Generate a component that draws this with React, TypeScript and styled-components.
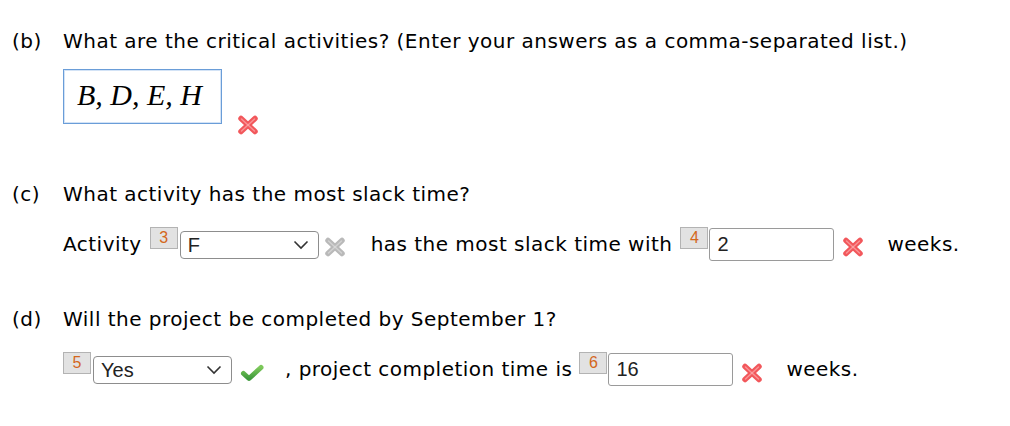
import React from 'react';
import styled, { createGlobalStyle } from 'styled-components';

const GlobalStyle = createGlobalStyle`
  html, body {
    margin: 0;
    padding: 0;
    background: #fff;
  }
  body {
    font-family: "DejaVu Sans", Verdana, sans-serif;
    color: #000;
  }
`;

const Page = styled.div`
  width: 1010px;
  height: 426px;
  padding: 28px 0 0 12px;
  box-sizing: border-box;
  overflow: hidden;
`;

const Part = styled.section<{ $gap: number }>`
  display: grid;
  grid-template-columns: 51px 1fr;
  margin-top: ${p => p.$gap}px;
`;

const Label = styled.div`
  font-size: 20px;
  line-height: 26px;
  letter-spacing: 0.5px;
`;

const Body = styled.div`
  display: flex;
  flex-direction: column;
`;

const Question = styled.div`
  font-size: 20px;
  line-height: 26px;
  letter-spacing: 0.48px;
  white-space: nowrap;
`;

const Row = styled.div<{ $top: number }>`
  display: flex;
  align-items: flex-start;
  margin-top: ${p => p.$top}px;
  white-space: nowrap;
`;

const Text = styled.span<{ $left?: number }>`
  font-size: 20px;
  line-height: 26px;
  letter-spacing: 0.48px;
  margin-top: 4px;
  margin-left: ${p => p.$left ?? 0}px;
`;

const AnswerBox = styled.div`
  width: 159px;
  height: 55px;
  box-sizing: border-box;
  border: 1px solid #6a9dd8;
  box-shadow: inset 0 0 0 1px #d3e3f6;
  padding: 6px 0 0 13px;
  font-family: "Liberation Serif", "Times New Roman", serif;
  font-style: italic;
  font-size: 30px;
  line-height: 38px;
`;

const Badge = styled.span<{ $left?: number }>`
  width: 28px;
  height: 22px;
  box-sizing: border-box;
  margin-left: ${p => p.$left ?? 0}px;
  background: #e2e2e2;
  border: 1px solid #b3b3b3;
  color: #d4671c;
  font-family: "Liberation Sans", Arial, sans-serif;
  font-size: 16px;
  line-height: 20px;
  text-align: center;
`;

const SelectBox = styled.div`
  display: flex;
  align-items: center;
  justify-content: space-between;
  width: 139px;
  height: 28px;
  box-sizing: border-box;
  margin: 4px 0 0 2px;
  padding: 0 9px 0 7px;
  border: 1px solid #8d8d8d;
  border-radius: 4px;
  background: #fff;
  font-family: "Liberation Sans", Arial, sans-serif;
  font-size: 20px;
  color: #222;
`;

const TextInput = styled.div`
  width: 125px;
  height: 33px;
  box-sizing: border-box;
  margin: 1px 0 0 1px;
  padding: 0 7px;
  border: 1px solid #9a9a9a;
  border-radius: 3px;
  background: #fff;
  font-family: "Liberation Sans", Arial, sans-serif;
  font-size: 20px;
  line-height: 31px;
  color: #222;
`;

const Mark = styled.span<{ $top: number; $left: number }>`
  display: inline-flex;
  margin-top: ${p => p.$top}px;
  margin-left: ${p => p.$left}px;
`;

const Chevron = () => (
  <svg width="16" height="10" viewBox="0 0 16 10">
    <polyline points="1.5,1.5 8,8 14.5,1.5" fill="none" stroke="#333" strokeWidth="1.6" />
  </svg>
);

const Cross = ({ color, light }: { color: string; light: string }) => (
  <svg width="22" height="20" viewBox="0 0 22 20">
    <g strokeLinecap="round" fill="none">
      <line x1="4" y1="3.5" x2="18" y2="16.5" stroke={color} strokeWidth="5.5" />
      <line x1="18" y1="3.5" x2="4" y2="16.5" stroke={color} strokeWidth="5.5" />
      <line x1="4.5" y1="4" x2="17.5" y2="16" stroke={light} strokeWidth="1.5" opacity="0.55" />
      <line x1="17.5" y1="4" x2="4.5" y2="16" stroke={light} strokeWidth="1.5" opacity="0.55" />
    </g>
  </svg>
);

const Check = () => (
  <svg width="24" height="18" viewBox="0 0 24 18">
    <defs>
      <linearGradient id="chk" x1="0" y1="0" x2="0" y2="1">
        <stop offset="0" stopColor="#7cc85a" />
        <stop offset="1" stopColor="#3f9a3c" />
      </linearGradient>
    </defs>
    <polyline
      points="3.5,9.5 9,14.5 21,3.5"
      fill="none"
      stroke="url(#chk)"
      strokeWidth="5"
      strokeLinecap="round"
      strokeLinejoin="round"
    />
  </svg>
);

const RedX = () => <Cross color="#f2575b" light="#ffc2c2" />;
const GreyX = () => <Cross color="#b9b9b9" light="#e6e6e6" />;

export default function App() {
  return (
    <Page>
      <GlobalStyle />

      <Part $gap={0}>
        <Label>(b)</Label>
        <Body>
          <Question>What are the critical activities? (Enter your answers as a comma-separated list.)</Question>
          <Row $top={15}>
            <AnswerBox>B, D, E, H</AnswerBox>
            <Mark $top={46} $left={15}>
              <RedX />
            </Mark>
          </Row>
        </Body>
      </Part>

      <Part $gap={46}>
        <Label>(c)</Label>
        <Body>
          <Question>What activity has the most slack time?</Question>
          <Row $top={20}>
            <Text>Activity</Text>
            <Badge $left={8}>3</Badge>
            <SelectBox>
              <span>F</span>
              <Chevron />
            </SelectBox>
            <Mark $top={10} $left={5}>
              <GreyX />
            </Mark>
            <Text $left={25}>has the most slack time with</Text>
            <Badge $left={8}>4</Badge>
            <TextInput>2</TextInput>
            <Mark $top={10} $left={8}>
              <RedX />
            </Mark>
            <Text $left={23}>weeks.</Text>
          </Row>
        </Body>
      </Part>

      <Part $gap={45}>
        <Label>(d)</Label>
        <Body>
          <Question>Will the project be completed by September 1?</Question>
          <Row $top={20}>
            <Badge>5</Badge>
            <SelectBox>
              <span>Yes</span>
              <Chevron />
            </SelectBox>
            <Mark $top={12} $left={8}>
              <Check />
            </Mark>
            <Text $left={21}>, project completion time is</Text>
            <Badge $left={7}>6</Badge>
            <TextInput>16</TextInput>
            <Mark $top={11} $left={8}>
              <RedX />
            </Mark>
            <Text $left={23}>weeks.</Text>
          </Row>
        </Body>
      </Part>
    </Page>
  );
}
